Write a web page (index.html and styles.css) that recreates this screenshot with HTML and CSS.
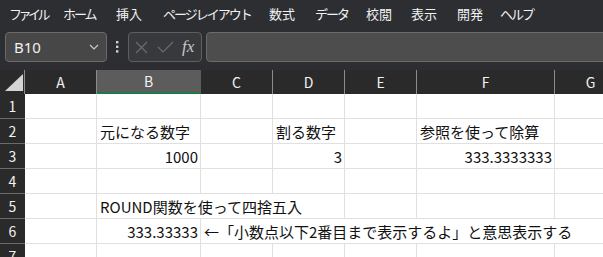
FILE: index.html
```html
<!DOCTYPE html>
<html lang="ja">

<head>
  <meta charset="UTF-8">
  <meta name="viewport" content="width=device-width, initial-scale=1.0">
  <title>Book1 - Excel</title>
  <link rel="stylesheet" href="styles.css">
</head>

<body>
  <!-- メニュー -->
  <nav class="menubar">
    <span class="m54 kana4">ファイル</span>
    <span class="m53 kana2">ホーム</span>
    <span class="m47">挿入</span>
    <span class="m106 kana2">ページレイアウト</span>
    <span class="m46">数式</span>
    <span class="m51 kana2">データ</span>
    <span class="m45">校閲</span>
    <span class="m46">表示</span>
    <span class="m43">開発</span>
    <span class="kana2">ヘルプ</span>
  </nav>

  <!-- 名前ボックスと数式バー -->
  <div class="toolbar">
    <div class="namebox">
      <span>B10</span>
      <svg width="10" height="6" viewBox="0 0 10 6"><polyline points="1,1 5,5 9,1" fill="none" stroke="#c8c8c8" stroke-width="1.2"/></svg>
    </div>
    <svg class="dots" width="3" height="12" viewBox="0 0 3 12">
      <rect x="0" y="0" width="2.4" height="2.4" fill="#d0d0d0"/>
      <rect x="0" y="4.6" width="2.4" height="2.4" fill="#d0d0d0"/>
      <rect x="0" y="9.2" width="2.4" height="2.4" fill="#d0d0d0"/>
    </svg>
    <div class="fxbox">
      <svg width="13" height="13" viewBox="0 0 13 13"><path d="M1 1 L12 12 M12 1 L1 12" stroke="#6c6c6c" stroke-width="1.2"/></svg>
      <svg width="17" height="12" viewBox="0 0 17 12"><polyline points="1,6 6,11 16,1" fill="none" stroke="#6c6c6c" stroke-width="1.2"/></svg>
      <span class="fx">fx</span>
    </div>
    <div class="formula"></div>
  </div>

  <!-- シート -->
  <div class="sheet">
    <div class="corner"><svg width="18" height="17" viewBox="0 0 18 17"><polygon points="18,0 18,17 0,17" fill="#d4d4d4"/></svg></div>
    <div class="colhead">A</div>
    <div class="colhead selected">B</div>
    <div class="colhead">C</div>
    <div class="colhead">D</div>
    <div class="colhead">E</div>
    <div class="colhead">F</div>
    <div class="colhead">G</div>

    <div class="rowhead">1</div>
    <div class="cell"></div><div class="cell"></div><div class="cell"></div><div class="cell"></div><div class="cell"></div><div class="cell"></div><div class="cell"></div>

    <div class="rowhead">2</div>
    <div class="cell"></div>
    <div class="cell">元になる数字</div>
    <div class="cell"></div>
    <div class="cell">割る数字</div>
    <div class="cell"></div>
    <div class="cell">参照を使って除算</div>
    <div class="cell"></div>

    <div class="rowhead">3</div>
    <div class="cell"></div>
    <div class="cell num">1000</div>
    <div class="cell"></div>
    <div class="cell num">3</div>
    <div class="cell"></div>
    <div class="cell num">333.3333333</div>
    <div class="cell"></div>

    <div class="rowhead">4</div>
    <div class="cell"></div><div class="cell"></div><div class="cell"></div><div class="cell"></div><div class="cell"></div><div class="cell"></div><div class="cell"></div>

    <div class="rowhead">5</div>
    <div class="cell"></div>
    <div class="cell span3">ROUND関数を使って四捨五入</div>
    <div class="cell"></div>
    <div class="cell"></div>
    <div class="cell"></div>

    <div class="rowhead">6</div>
    <div class="cell"></div>
    <div class="cell num">333.33333</div>
    <div class="cell span5">←「小数点以下2番目まで表示するよ」と意思表示する</div>

    <div class="rowhead">7</div>
    <div class="cell"></div><div class="cell"></div><div class="cell"></div><div class="cell"></div><div class="cell"></div><div class="cell"></div><div class="cell"></div>
  </div>
</body>

</html>
```

FILE: styles.css
```css
body {
  margin: 0;
  width: 603px;
  height: 257px;
  overflow: hidden;
  background: #2d2e32;
  font-family: "Noto Sans CJK JP", "Noto Sans", sans-serif;
}

.menubar {
  display: flex;
  align-items: center;
  height: 26px;
  padding-left: 9px;
  color: #f2f2f2;
  font-size: 13px;
  white-space: nowrap;
}

.menubar span {
  flex: none;
}

/* カタカナは Yu Gothic UI ほど詰まらないので字間で寄せる */
.kana2 { letter-spacing: -2px; }
.kana4 { letter-spacing: -3.5px; }

.m43 { width: 43px; }
.m45 { width: 45px; }
.m46 { width: 46px; }
.m47 { width: 47px; }
.m51 { width: 51px; }
.m53 { width: 53px; }
.m54 { width: 54px; }
.m106 { width: 106px; }

.toolbar {
  display: flex;
  align-items: center;
  height: 30px;
  padding: 6px 0 8px 5px;
}

.namebox {
  box-sizing: border-box;
  display: flex;
  align-items: center;
  justify-content: space-between;
  width: 102px;
  height: 30px;
  padding: 0 7px 0 8px;
  border: 1px solid #6a6a6a;
  border-radius: 4px;
  background: #474747;
  color: #f0f0f0;
  font: 15px "Noto Sans", sans-serif;
}

.dots {
  margin: 0 9px;
}

.fxbox {
  box-sizing: border-box;
  display: flex;
  align-items: center;
  gap: 9px;
  width: 74px;
  height: 30px;
  padding-left: 6px;
  border: 1px solid #5e5e5e;
  border-radius: 4px;
  background: #38393c;
}

.fx {
  color: #c8c8c8;
  font: italic 17px "Liberation Serif", serif;
  margin-left: -1px;
}

.formula {
  box-sizing: border-box;
  flex: 1;
  height: 30px;
  margin-left: 4px;
  margin-right: -10px;
  border: 1px solid #6a6a6a;
  border-radius: 4px;
  background: #4d4d4d;
}

.sheet {
  display: grid;
  grid-template-columns: 25px 72px 104px 72px 72px 72px 138px 72px;
  grid-template-rows: 24px repeat(7, 25px);
}

.corner {
  display: flex;
  align-items: flex-end;
  padding: 0 0 3px 5px;
  background: #2a2a2a;
  border-right: 1px solid #8c8c8c;
}

.colhead {
  box-sizing: border-box;
  display: flex;
  align-items: center;
  justify-content: center;
  background: #2a2a2a;
  border-right: 1px solid #8c8c8c;
  color: #f2f2f2;
  font-size: 14px;
}

.colhead.selected {
  background: #5c5c5c;
  border-bottom: 2px solid #1f7a47;
  border-right-color: #5c5c5c;
}

.rowhead {
  box-sizing: border-box;
  display: flex;
  align-items: center;
  justify-content: center;
  background: #2a2a2a;
  border-bottom: 1px solid #6a6a6a;
  color: #f2f2f2;
  font-size: 14px;
}

.cell {
  box-sizing: border-box;
  display: flex;
  align-items: center;
  padding: 0 3px;
  background: #fff;
  border-right: 1px solid #e0e0e0;
  border-bottom: 1px solid #e0e0e0;
  color: #111;
  font-size: 15px;
  line-height: 1;
  white-space: nowrap;
}

.num {
  justify-content: flex-end;
  padding-right: 2px;
}

.span3 {
  grid-column: span 3;
}

.span5 {
  grid-column: span 5;
}
```
